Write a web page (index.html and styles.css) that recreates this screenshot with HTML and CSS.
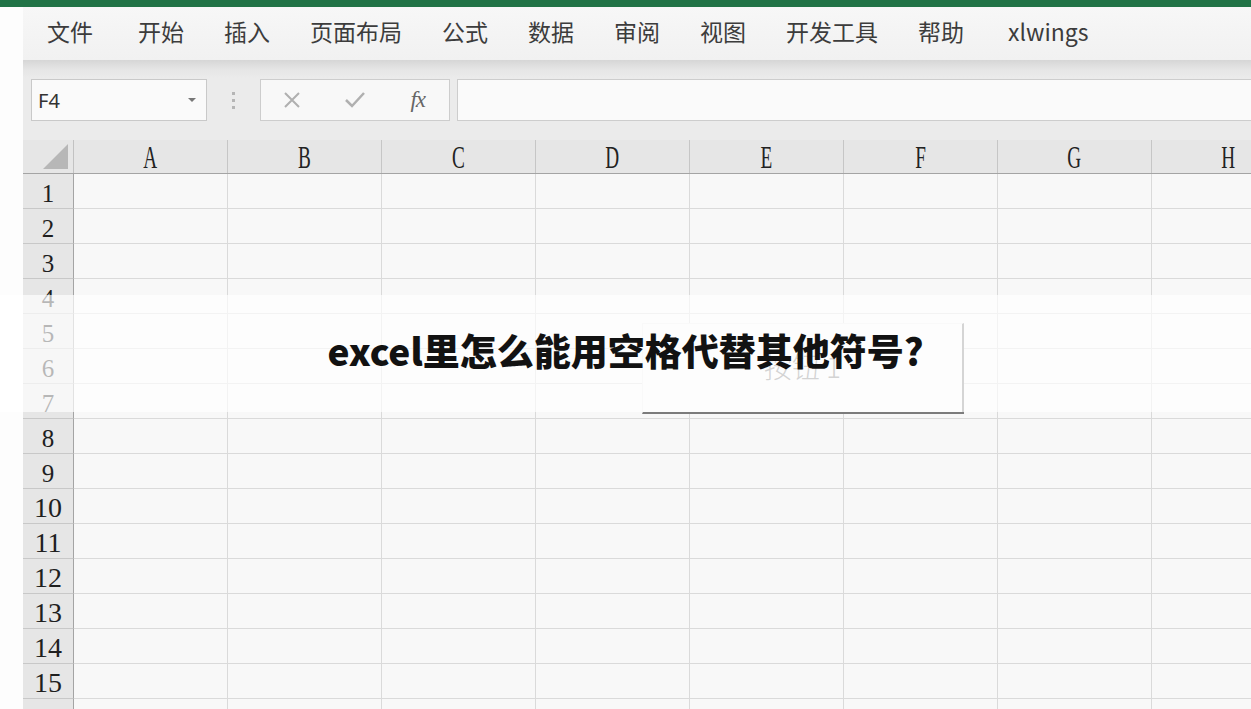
FILE: index.html
```html
<!DOCTYPE html>
<html lang="zh">
<head>
<meta charset="utf-8">
<title>excel</title>
<link rel="stylesheet" href="styles.css">
</head>
<body>
<div class="topbar"></div>
<div class="app">
  <nav class="tabs">
    <span class="tab first">文件</span>
    <span class="tab">开始</span>
    <span class="tab">插入</span>
    <span class="tab">页面布局</span>
    <span class="tab">公式</span>
    <span class="tab">数据</span>
    <span class="tab">审阅</span>
    <span class="tab">视图</span>
    <span class="tab">开发工具</span>
    <span class="tab">帮助</span>
    <span class="tab last">xlwings</span>
  </nav>
  <div class="formula">
    <div class="namebox"><span>F4</span><span class="caret"></span></div>
    <div class="dots"><i></i><i></i><i></i></div>
    <div class="fbuttons">
      <span class="fbtn"><svg width="18" height="18" viewBox="0 0 18 18"><path d="M2 2 L16 16 M16 2 L2 16" stroke="#b0b0b0" stroke-width="2" fill="none"/></svg></span>
      <span class="fbtn"><svg width="22" height="20" viewBox="0 0 22 20"><path d="M2 10 L8 16 L20 3" stroke="#b0b0b0" stroke-width="2.5" fill="none"/></svg></span>
      <span class="fbtn fx">fx</span>
    </div>
    <div class="finput"></div>
  </div>
  <div class="sheet">
    <div class="hrow">
      <div class="corner"><svg width="28" height="28" viewBox="0 0 28 28"><path d="M26 1 L26 26 L1 26 Z" fill="#b7b7b7"/></svg></div>
      <div class="ch"><span>A</span></div><div class="ch"><span>B</span></div><div class="ch"><span>C</span></div><div class="ch"><span>D</span></div><div class="ch"><span>E</span></div><div class="ch"><span>F</span></div><div class="ch"><span>G</span></div><div class="ch"><span>H</span></div>
    </div>
    <div class="row"><div class="rh">1</div><div class="c"></div><div class="c"></div><div class="c"></div><div class="c"></div><div class="c"></div><div class="c"></div><div class="c"></div><div class="c"></div></div>
    <div class="row"><div class="rh">2</div><div class="c"></div><div class="c"></div><div class="c"></div><div class="c"></div><div class="c"></div><div class="c"></div><div class="c"></div><div class="c"></div></div>
    <div class="row"><div class="rh">3</div><div class="c"></div><div class="c"></div><div class="c"></div><div class="c"></div><div class="c"></div><div class="c"></div><div class="c"></div><div class="c"></div></div>
    <div class="row"><div class="rh">4</div><div class="c"></div><div class="c"></div><div class="c"></div><div class="c"></div><div class="c"></div><div class="c"></div><div class="c"></div><div class="c"></div></div>
    <div class="row"><div class="rh">5</div><div class="c"></div><div class="c"></div><div class="c"></div><div class="c"></div><div class="c"></div><div class="c"></div><div class="c"></div><div class="c"></div></div>
    <div class="row"><div class="rh">6</div><div class="c"></div><div class="c"></div><div class="c"></div><div class="c"></div><div class="c"></div><div class="c"></div><div class="c"></div><div class="c"></div></div>
    <div class="row"><div class="rh">7</div><div class="c"></div><div class="c"></div><div class="c"></div><div class="c"></div><div class="c"></div><div class="c"></div><div class="c"></div><div class="c"></div></div>
    <div class="row"><div class="rh">8</div><div class="c"></div><div class="c"></div><div class="c"></div><div class="c"></div><div class="c"></div><div class="c"></div><div class="c"></div><div class="c"></div></div>
    <div class="row"><div class="rh">9</div><div class="c"></div><div class="c"></div><div class="c"></div><div class="c"></div><div class="c"></div><div class="c"></div><div class="c"></div><div class="c"></div></div>
    <div class="row"><div class="rh big">10</div><div class="c"></div><div class="c"></div><div class="c"></div><div class="c"></div><div class="c"></div><div class="c"></div><div class="c"></div><div class="c"></div></div>
    <div class="row"><div class="rh big">11</div><div class="c"></div><div class="c"></div><div class="c"></div><div class="c"></div><div class="c"></div><div class="c"></div><div class="c"></div><div class="c"></div></div>
    <div class="row"><div class="rh big">12</div><div class="c"></div><div class="c"></div><div class="c"></div><div class="c"></div><div class="c"></div><div class="c"></div><div class="c"></div><div class="c"></div></div>
    <div class="row"><div class="rh big">13</div><div class="c"></div><div class="c"></div><div class="c"></div><div class="c"></div><div class="c"></div><div class="c"></div><div class="c"></div><div class="c"></div></div>
    <div class="row"><div class="rh big">14</div><div class="c"></div><div class="c"></div><div class="c"></div><div class="c"></div><div class="c"></div><div class="c"></div><div class="c"></div><div class="c"></div></div>
    <div class="row"><div class="rh big">15</div><div class="c"></div><div class="c"></div><div class="c"></div><div class="c"></div><div class="c"></div><div class="c"></div><div class="c"></div><div class="c"></div></div>
    <div class="row"><div class="rh big"></div><div class="c"></div><div class="c"></div><div class="c"></div><div class="c"></div><div class="c"></div><div class="c"></div><div class="c"></div><div class="c"></div></div>
  </div>
</div>
<div class="sheetbutton">按钮 1</div>
<div class="band"></div>
<h1 class="title">excel里怎么能用空格代替其他符号?</h1>
</body>
</html>
```

FILE: styles.css
```css
html, body {
  margin: 0;
  padding: 0;
}
body {
  width: 1251px;
  height: 709px;
  overflow: hidden;
  background: #fdfdfd;
  position: relative;
  font-family: "Noto Sans CJK SC", "Noto Sans", sans-serif;
}
.topbar {
  height: 7px;
  background: #217346;
}
.app {
  margin-left: 23px;
}
.tabs {
  height: 53px;
  background: linear-gradient(#f7f7f7, #f1f1f1);
  display: flex;
  align-items: center;
  padding: 0 0 6px 24px;
  gap: 40px;
  box-sizing: border-box;
}
.tab {
  font-size: 23px;
  color: #3c3c3c;
  line-height: 30px;
}
.tab.first {
  margin-right: 5px;
}
.tab.last {
  margin-left: 4px;
}
.formula {
  height: 80px;
  background: linear-gradient(#d6d6d6, #e6e6e6 10px, #ebebeb 18px, #ebebeb);
  display: flex;
  align-items: flex-start;
  padding: 19px 0 0 8px;
  box-sizing: border-box;
}
.namebox {
  width: 176px;
  height: 42px;
  box-sizing: border-box;
  background: #fafafa;
  border: 1px solid #c9c9c9;
  display: flex;
  align-items: center;
  justify-content: space-between;
  padding: 0 10px 0 6px;
  font-family: "Noto Sans", "Open Sans", sans-serif;
  font-size: 20px;
  color: #333;
}
.caret {
  width: 0;
  height: 0;
  border-left: 4px solid transparent;
  border-right: 4px solid transparent;
  border-top: 4px solid #777;
}
.dots {
  width: 53px;
  height: 42px;
  display: flex;
  flex-direction: column;
  align-items: center;
  justify-content: center;
  gap: 4px;
}
.dots i {
  display: block;
  width: 3px;
  height: 3px;
  background: #b5b5b5;
}
.fbuttons {
  width: 190px;
  height: 42px;
  box-sizing: border-box;
  background: #f8f8f8;
  border: 1px solid #cdcdcd;
  display: flex;
  align-items: center;
}
.fbtn {
  width: 63px;
  display: flex;
  justify-content: center;
  align-items: center;
}
.fx {
  font-family: "Liberation Serif", serif;
  font-style: italic;
  font-size: 23px;
  color: #666;
  letter-spacing: -1px;
}
.finput {
  flex: 1;
  height: 42px;
  margin-left: 7px;
  box-sizing: border-box;
  background: #fafafa;
  border: 1px solid #cdcdcd;
  border-right: none;
}
.sheet {
  background: #f8f8f8;
}
.hrow, .row {
  display: flex;
  white-space: nowrap;
}
.hrow {
  height: 34px;
  background: #e6e6e6;
  border-bottom: 1px solid #a4a4a4;
  box-sizing: border-box;
}
.corner {
  width: 51px;
  flex: none;
  box-sizing: border-box;
  border-right: 1px solid #c2c2c2;
  display: flex;
  align-items: flex-end;
  justify-content: flex-end;
  padding: 0 3px 2px 0;
}
.ch {
  width: 154px;
  flex: none;
  box-sizing: border-box;
  border-right: 1px solid #c6c6c6;
  display: flex;
  justify-content: center;
  align-items: center;
  font-family: "Liberation Serif", serif;
  font-size: 31px;
  color: #222;
  padding-top: 2px;
}
.ch span {
  display: inline-block;
  transform: scaleX(0.62);
  line-height: 30px;
}
.row {
  height: 35px;
}
.rh {
  width: 51px;
  flex: none;
  box-sizing: border-box;
  background: #e6e6e6;
  border-right: 1px solid #a4a4a4;
  border-bottom: 1px solid #c8c8c8;
  display: flex;
  justify-content: center;
  align-items: center;
  font-family: "Liberation Serif", serif;
  font-size: 25px;
  color: #1f1f1f;
  padding-top: 5px;
}
.rh.big {
  font-size: 28px;
  padding-top: 4px;
}
.c {
  width: 154px;
  flex: none;
  box-sizing: border-box;
  border-right: 1px solid #dadada;
  border-bottom: 1px solid #dadada;
}
.sheetbutton {
  position: absolute;
  left: 642px;
  top: 323px;
  width: 322px;
  height: 91px;
  box-sizing: border-box;
  background: #f9f9f9;
  border-right: 2px solid #7c7c7c;
  border-bottom: 2px solid #7c7c7c;
  border-top: 1px solid #ececec;
  border-left: 1px solid #ececec;
  display: flex;
  align-items: center;
  justify-content: center;
  font-family: "Noto Sans CJK SC", sans-serif;
  font-weight: 300;
  font-size: 28px;
  color: #777;
  padding-bottom: 4px;
}
.band {
  position: absolute;
  left: 0;
  right: 0;
  top: 295px;
  height: 117px;
  background: rgba(255, 255, 255, 0.68);
}
.title {
  position: absolute;
  left: 0;
  right: 0;
  top: 330px;
  margin: 0;
  text-align: center;
  font-family: "Noto Sans CJK SC", "Noto Sans", sans-serif;
  font-weight: 900;
  font-size: 37px;
  line-height: 40px;
  color: #121212;
}
```
